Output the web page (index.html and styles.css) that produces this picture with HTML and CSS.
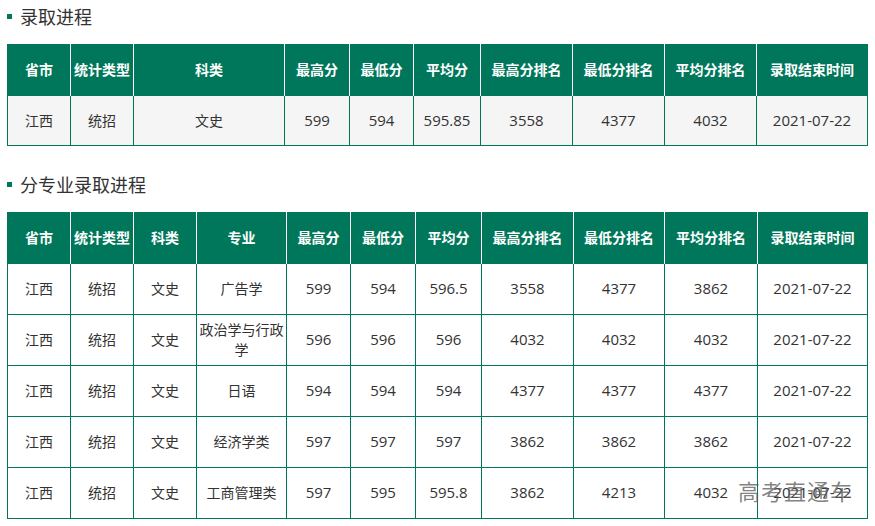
FILE: index.html
```html
<!DOCTYPE html>
<html lang="zh">
<head>
<meta charset="utf-8">
<link rel="stylesheet" href="styles.css">
</head>
<body>
<div class="page">
  <h2 class="title"><span class="dot"></span>录取进程</h2>
  <table class="grid grid-gray">
    <colgroup>
      <col style="width:63px"><col style="width:63px"><col style="width:151px"><col style="width:65px"><col style="width:64px"><col style="width:67px"><col style="width:92px"><col style="width:92px"><col style="width:92px"><col style="width:111px">
    </colgroup>
    <thead>
      <tr><th>省市</th><th>统计类型</th><th>科类</th><th>最高分</th><th>最低分</th><th>平均分</th><th>最高分排名</th><th>最低分排名</th><th>平均分排名</th><th>录取结束时间</th></tr>
    </thead>
    <tbody>
      <tr><td>江西</td><td>统招</td><td>文史</td><td>599</td><td>594</td><td>595.85</td><td>3558</td><td>4377</td><td>4032</td><td>2021-07-22</td></tr>
    </tbody>
  </table>

  <h2 class="title title2"><span class="dot"></span>分专业录取进程</h2>
  <table class="grid grid-major">
    <colgroup>
      <col style="width:63px"><col style="width:63px"><col style="width:63px"><col style="width:90px"><col style="width:64px"><col style="width:65px"><col style="width:66px"><col style="width:92px"><col style="width:91px"><col style="width:93px"><col style="width:110px">
    </colgroup>
    <thead>
      <tr><th>省市</th><th>统计类型</th><th>科类</th><th>专业</th><th>最高分</th><th>最低分</th><th>平均分</th><th>最高分排名</th><th>最低分排名</th><th>平均分排名</th><th>录取结束时间</th></tr>
    </thead>
    <tbody>
      <tr><td>江西</td><td>统招</td><td>文史</td><td>广告学</td><td>599</td><td>594</td><td>596.5</td><td>3558</td><td>4377</td><td>3862</td><td>2021-07-22</td></tr>
      <tr><td>江西</td><td>统招</td><td>文史</td><td>政治学与行政学</td><td>596</td><td>596</td><td>596</td><td>4032</td><td>4032</td><td>4032</td><td>2021-07-22</td></tr>
      <tr><td>江西</td><td>统招</td><td>文史</td><td>日语</td><td>594</td><td>594</td><td>594</td><td>4377</td><td>4377</td><td>4377</td><td>2021-07-22</td></tr>
      <tr><td>江西</td><td>统招</td><td>文史</td><td>经济学类</td><td>597</td><td>597</td><td>597</td><td>3862</td><td>3862</td><td>3862</td><td>2021-07-22</td></tr>
      <tr><td>江西</td><td>统招</td><td>文史</td><td>工商管理类</td><td>597</td><td>595</td><td>595.8</td><td>3862</td><td>4213</td><td>4032</td><td>2021-07-22</td></tr>
    </tbody>
  </table>
  <div class="watermark">高考直通车</div>
</div>
</body>
</html>
```

FILE: styles.css
```css
* { box-sizing: border-box; }
html, body {
  margin: 0;
  padding: 0;
  background: #fff;
}
body {
  font-family: "Noto Sans CJK SC", "Microsoft YaHei", sans-serif;
  color: #333;
  font-size: 14px;
}
.page {
  position: relative;
  padding: 0 7px;
  width: 875px;
  height: 526px;
  overflow: hidden;
}
.title {
  margin: 0 0 10px 0;
  height: 34px;
  line-height: 34px;
  font-size: 18px;
  font-weight: normal;
  color: #333;
  display: flex;
  align-items: center;
  padding-bottom: 2px;
}
.title2 {
  margin-top: 22px;
}
.dot {
  width: 5px;
  height: 5px;
  background: #00775a;
  margin-right: 8px;
  margin-top: 1px;
}
.grid {
  width: 860px;
  border-collapse: collapse;
  table-layout: fixed;
  border: 1px solid #00775a;
}
.grid th {
  background: #00775a;
  color: #fff;
  font-weight: bold;
  font-size: 14px;
  height: 51px;
  padding: 0 2px 2px;
  border-left: 1px solid #fff;
  border-right: 1px solid #fff;
  border-top: 1px solid #00775a;
  text-align: center;
  white-space: nowrap;
}
.grid th:first-child { border-left-color: #00775a; }
.grid th:last-child { border-right-color: #00775a; }
.grid td {
  height: 51px;
  padding: 0 1px 2px;
  border: 1px solid #00775a;
  text-align: center;
  line-height: 20px;
  color: #333;
}
.grid-gray td {
  background: #f5f5f5;
  height: 50px;
}
.grid-gray td:nth-child(n+4),
.grid-major td:nth-child(n+5) {
  font-family: "Open Sans", "Noto Sans CJK SC", sans-serif;
  font-size: 15px;
}
.watermark {
  position: absolute;
  left: 738px;
  top: 474px;
  font-size: 22px;
  color: rgba(90, 90, 90, 0.75);
  letter-spacing: 1px;
  pointer-events: none;
}
```
